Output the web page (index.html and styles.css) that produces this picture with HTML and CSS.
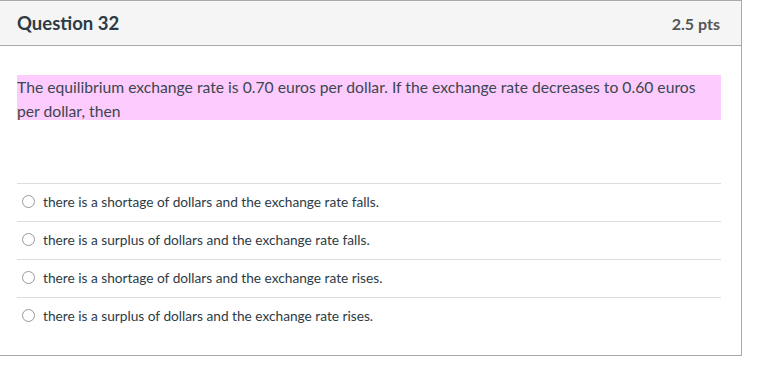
FILE: index.html
```html
<!DOCTYPE html>
<html lang="en">
<head>
    <meta charset="UTF-8">
    <title>Question 32</title>
    <link rel="stylesheet" href="styles.css">
</head>
<body>
    <div class="question">
        <div class="question-header">
            <h2>Question 32</h2>
            <span class="points">2.5 pts</span>
        </div>
        <div class="question-body">
            <p class="question-text">The equilibrium exchange rate is 0.70 euros per dollar. If the exchange rate decreases to 0.60 euros per dollar, then</p>
            <div class="answers">
                <label class="answer"><span class="radio"></span>there is a shortage of dollars and the exchange rate falls.</label>
                <label class="answer"><span class="radio"></span>there is a surplus of dollars and the exchange rate falls.</label>
                <label class="answer"><span class="radio"></span>there is a shortage of dollars and the exchange rate rises.</label>
                <label class="answer"><span class="radio"></span>there is a surplus of dollars and the exchange rate rises.</label>
            </div>
        </div>
    </div>
</body>
</html>
```

FILE: styles.css
```css
body {
    margin: 0;
    padding: 0;
    font-family: Lato, 'Open Sans', sans-serif;
    background: #fff;
    color: #2d3b45;
}
.question {
    width: 741px;
    border-top: 1px solid #aaa;
    border-right: 1px solid #aaa;
    border-bottom: 1px solid #aaa;
}
.question-header {
    height: 44px;
    background: #f5f5f5;
    border-bottom: 1px solid #aaa;
    display: flex;
    align-items: center;
    justify-content: space-between;
    padding: 0 21px 0 17px;
}
.question-header h2 {
    margin: 0;
    font-size: 18.5px;
    font-weight: 700;
    color: #2d3b45;
}
.points {
    font-size: 16px;
    font-weight: 700;
    color: #555;
}
.question-body {
    padding: 29px 20px 20px 17px;
}
.question-text {
    margin: 0;
    background: #fdcbfd;
    font-size: 15.7px;
    line-height: 24px;
    color: #3a4750;
    height: 45px;
}
.answers {
    margin-top: 63px;
}
.answer {
    display: flex;
    align-items: center;
    box-sizing: border-box;
    height: 38px;
    padding-bottom: 2px;
    border-top: 1px solid #ddd;
    font-size: 13.7px;
    color: #2d3b45;
}
.radio {
    width: 11px;
    height: 11px;
    border: 1px solid #999;
    border-radius: 50%;
    margin: 0 8px 0 5px;
    background: #fff;
}
```
